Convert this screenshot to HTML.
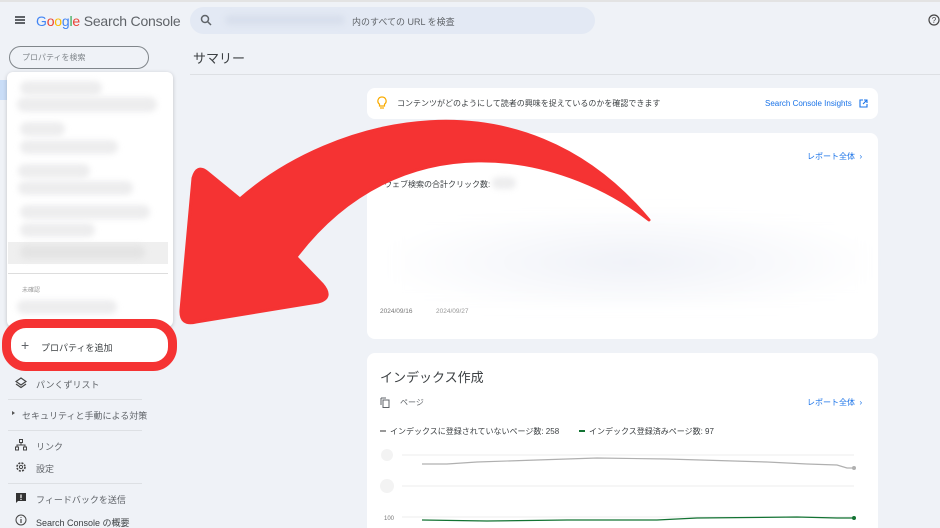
<!DOCTYPE html>
<html><head><meta charset="utf-8"><style>
*{box-sizing:border-box;margin:0;padding:0}
html,body{width:940px;height:528px;overflow:hidden}
body{background:#eff2f7;font-family:"Liberation Sans","Noto Sans CJK JP",sans-serif;color:#3c4043;position:relative}
.a{position:absolute}
.blur{position:absolute;background:#ededee;border-radius:10px;filter:blur(3px)}
.card{position:absolute;background:#fff;border-radius:8px}
.t{font-size:9px;color:#5f6368}
.lk{color:#1a73e8;font-size:8px}
</style></head><body>
<div class="a" style="left:0;top:0;width:940px;height:2px;background:#e3e3e3"></div>
<div class="a" style="left:15px;top:16px;width:10px;height:1.5px;background:#5f6368;box-shadow:0 3px 0 #5f6368,0 6px 0 #5f6368"></div>
<div class="a" style="left:36px;top:13px;font-size:14px;letter-spacing:-0.2px"><span style="color:#4285f4">G</span><span style="color:#ea4335">o</span><span style="color:#fbbc05">o</span><span style="color:#4285f4">g</span><span style="color:#34a853">l</span><span style="color:#ea4335">e</span> <span style="color:#5f6368">Search Console</span></div>
<div class="a" style="left:190px;top:7px;width:405px;height:27px;border-radius:14px;background:#e3e9f4"></div>
<svg class="a" style="left:200px;top:14px" width="12" height="12" viewBox="0 0 12 12"><circle cx="5" cy="5" r="3.5" fill="none" stroke="#5f6368" stroke-width="1.5"/><path d="M7.5 7.5L11 11" stroke="#5f6368" stroke-width="1.5"/></svg>
<div class="blur" style="left:225px;top:15px;width:120px;height:10px;background:#d8dfec"></div>
<div class="a t" style="left:352px;top:15px">内のすべての URL を検査</div>
<svg class="a" style="left:928px;top:14px" width="12" height="12" viewBox="0 0 12 12"><circle cx="6" cy="6" r="5" fill="none" stroke="#444" stroke-width="1.2"/><text x="6" y="9" font-size="8" text-anchor="middle" fill="#444" font-family="Liberation Sans">?</text></svg>
<div class="a" style="left:9px;top:46px;width:140px;height:23px;border:1px solid #80868b;border-radius:12px"></div>
<div class="a" style="left:22px;top:52px;font-size:8px;color:#80868b">プロパティを検索</div>
<div class="a" style="left:0;top:80px;width:8px;height:20px;background:#c9ddf7"></div>
<div class="a" style="left:193px;top:48px;font-size:13px;color:#3c4043">サマリー</div>
<div class="a" style="left:190px;top:74px;width:750px;height:1px;background:#dde0e4"></div>
<div class="card" style="left:7px;top:72px;width:166px;height:255px;border-radius:6px;box-shadow:0 1px 4px rgba(0,0,0,.2)"></div>
<div class="blur" style="left:20px;top:81px;width:82px;height:14px"></div>
<div class="blur" style="left:17px;top:97px;width:140px;height:15px"></div>
<div class="blur" style="left:20px;top:122px;width:45px;height:14px"></div>
<div class="blur" style="left:20px;top:140px;width:98px;height:14px"></div>
<div class="blur" style="left:18px;top:164px;width:72px;height:14px"></div>
<div class="blur" style="left:18px;top:181px;width:115px;height:14px"></div>
<div class="blur" style="left:20px;top:205px;width:130px;height:14px"></div>
<div class="blur" style="left:20px;top:223px;width:75px;height:14px"></div>
<div class="a" style="left:8px;top:242px;width:160px;height:22px;background:#efefef"></div>
<div class="blur" style="left:20px;top:245px;width:125px;height:14px;background:#e4e4e4"></div>
<div class="a" style="left:8px;top:273px;width:160px;height:1px;background:#ddd"></div>
<div class="a" style="left:22px;top:285px;font-size:6px;color:#999">未確認</div>
<div class="blur" style="left:17px;top:300px;width:100px;height:14px"></div>
<div class="a" style="left:2px;top:319px;width:175px;height:52px;border:9px solid #f53333;border-radius:24px;background:#fff"></div>
<div class="a" style="left:21px;top:338px;font-size:14px;color:#5f6368;line-height:14px">+</div>
<div class="a" style="left:41px;top:341px;font-size:9px;color:#3c4043">プロパティを追加</div>
<svg class="a" style="left:15px;top:377px" width="12" height="12" viewBox="0 0 12 12"><path d="M6 1L11 4.5 6 8 1 4.5Z M1 7L6 10.5 11 7" fill="none" stroke="#444" stroke-width="1.2"/></svg>
<div class="a t" style="left:36px;top:378px">パンくずリスト</div>
<div class="a" style="left:8px;top:399px;width:134px;height:1px;background:#dde0e4"></div>
<div class="a" style="left:12px;top:411px;border-left:3px solid #555;border-top:2px solid transparent;border-bottom:2px solid transparent"></div>
<div class="a t" style="left:22px;top:409px">セキュリティと手動による対策</div>
<div class="a" style="left:8px;top:430px;width:134px;height:1px;background:#dde0e4"></div>
<svg class="a" style="left:15px;top:439px" width="12" height="12" viewBox="0 0 12 12"><rect x="4.5" y="0.5" width="3" height="3" fill="none" stroke="#444"/><rect x="0.5" y="8" width="3" height="3" fill="none" stroke="#444"/><rect x="8.5" y="8" width="3" height="3" fill="none" stroke="#444"/><path d="M6 3.5V6M2 8V6H10V8" fill="none" stroke="#444"/></svg>
<div class="a t" style="left:36px;top:440px">リンク</div>
<svg class="a" style="left:15px;top:461px" width="12" height="12" viewBox="0 0 12 12"><circle cx="6" cy="6" r="4" fill="none" stroke="#444" stroke-width="1.6" stroke-dasharray="2 1.2"/><circle cx="6" cy="6" r="1.6" fill="none" stroke="#444"/></svg>
<div class="a t" style="left:36px;top:462px">設定</div>
<div class="a" style="left:8px;top:483px;width:134px;height:1px;background:#dde0e4"></div>
<svg class="a" style="left:15px;top:492px" width="12" height="12" viewBox="0 0 12 12"><path d="M1 1H11V9H3L1 11Z" fill="#333"/><rect x="5.4" y="2.5" width="1.2" height="3.5" fill="#fff"/><rect x="5.4" y="6.8" width="1.2" height="1.2" fill="#fff"/></svg>
<div class="a t" style="left:36px;top:493px">フィードバックを送信</div>
<svg class="a" style="left:15px;top:514px" width="12" height="12" viewBox="0 0 12 12"><circle cx="6" cy="6" r="5" fill="none" stroke="#444"/><path d="M6 5V9M6 3.2V4" stroke="#444" stroke-width="1.2"/></svg>
<div class="a t" style="left:36px;top:516px;color:#3c4043">Search Console の概要</div>
<div class="card" style="left:367px;top:88px;width:511px;height:31px"></div>
<svg class="a" style="left:377px;top:96px" width="10" height="14" viewBox="0 0 10 14"><path d="M5 1A4 4 0 0 0 2.5 8.2V10H7.5V8.2A4 4 0 0 0 5 1Z" fill="none" stroke="#f9ab00" stroke-width="1.2"/><path d="M3 12H7" stroke="#f9ab00" stroke-width="1.2"/></svg>
<div class="a" style="left:397px;top:98px;font-size:8px;color:#3c4043">コンテンツがどのようにして読者の興味を捉えているのかを確認できます</div>
<div class="a lk" style="left:765px;top:99px">Search Console Insights</div>
<svg class="a" style="left:859px;top:99px" width="9" height="9" viewBox="0 0 9 9"><path d="M4 1H1V8H8V5M5 1H8V4M8 1L4 5" fill="none" stroke="#1a73e8" stroke-width="1.1"/></svg>
<div class="card" style="left:367px;top:133px;width:511px;height:206px"></div>
<div class="a lk" style="left:807px;top:151px">レポート全体 &nbsp;›</div>
<div class="a" style="left:384px;top:179px;font-size:8px;color:#3c4043">ウェブ検索の合計クリック数:</div>
<div class="blur" style="left:492px;top:177px;width:24px;height:12px"></div>
<div class="a" style="left:390px;top:210px;width:480px;height:95px;background:radial-gradient(ellipse at 50% 55%,#f0f2f8,#fff 75%);filter:blur(6px)"></div>
<div class="a" style="left:380px;top:308px;font-size:6.5px;color:#777">2024/09/16</div>
<div class="a" style="left:436px;top:308px;font-size:6.5px;color:#999">2024/09/27</div>
<div class="card" style="left:367px;top:353px;width:511px;height:190px"></div>
<div class="a" style="left:380px;top:367px;font-size:13px;color:#3c4043">インデックス作成</div>
<svg class="a" style="left:380px;top:397px" width="10" height="11" viewBox="0 0 10 11"><path d="M1 1H6M1 1V8" stroke="#5f6368" fill="none"/><rect x="3" y="3" width="6" height="7.5" fill="none" stroke="#5f6368"/></svg>
<div class="a" style="left:400px;top:397px;font-size:8px;color:#5f6368">ページ</div>
<div class="a lk" style="left:807px;top:397px">レポート全体 &nbsp;›</div>
<div class="a" style="left:380px;top:430px;width:6px;height:2px;background:#999"></div>
<div class="a" style="left:390px;top:426px;font-size:8px;color:#3c4043;white-space:nowrap">インデックスに登録されていないページ数: 258</div>
<div class="a" style="left:579px;top:430px;width:6px;height:2px;background:#137333"></div>
<div class="a" style="left:589px;top:426px;font-size:8px;color:#3c4043;white-space:nowrap">インデックス登録済みページ数: 97</div>
<svg class="a" style="left:367px;top:440px" width="511" height="88" viewBox="0 0 511 88">
<line x1="35" y1="15" x2="487" y2="15" stroke="#eee"/>
<line x1="35" y1="46" x2="487" y2="46" stroke="#eee"/>
<line x1="35" y1="77" x2="487" y2="77" stroke="#eee"/>
<circle cx="20" cy="15" r="6" fill="#f3f3f3"/><circle cx="20" cy="46" r="7" fill="#f3f3f3"/>
<text x="17" y="80" font-size="6" fill="#777" font-family="Liberation Sans">100</text>
<path d="M55 24L80 24 110 22 170 20 230 18 300 19 400 22 440 24 470 25 480 28 487 28" fill="none" stroke="#b0b0b0" stroke-width="1.2"/>
<circle cx="487" cy="28" r="2" fill="#b0b0b0"/>
<path d="M55 80L120 81 200 80 290 80 330 78 430 77 470 78 487 78" fill="none" stroke="#137333" stroke-width="1.3"/>
<circle cx="487" cy="78" r="2" fill="#137333"/>
</svg>
<svg class="a" style="left:0;top:0" width="940" height="528" viewBox="0 0 940 528">
<path d="M240 199 C330 120 520 65 649 220 C560 150 400 120 296 257 L322 284 Q334 298 318 302 L196 322 Q180 326 181 310 L193 178 Q197 164 207 172 Z" fill="#f53333" stroke="#f53333" stroke-width="3" stroke-linejoin="round"/>
</svg>
</body></html>
